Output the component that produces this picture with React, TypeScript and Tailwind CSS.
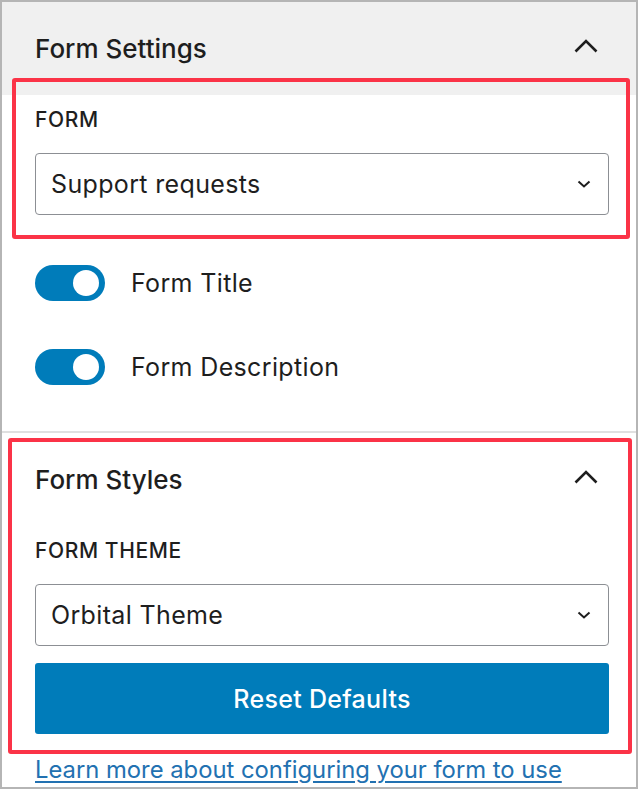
import { useState } from "react";

const FONT = { fontFamily: "Inter, 'Noto Sans', sans-serif" };

function ChevronUp() {
  return (
    <svg width="24" height="24" viewBox="0 0 24 24" fill="none" aria-hidden>
      <path d="M1.5 14.5 12 4l10.5 10.5" stroke="#1e1e1e" strokeWidth="2.6" />
    </svg>
  );
}

function ChevronDown() {
  return (
    <svg width="18" height="18" viewBox="0 0 18 18" fill="none" aria-hidden>
      <path d="M3.5 6.5 9 11.5l5.5-5" stroke="#1e1e1e" strokeWidth="2" />
    </svg>
  );
}

function SelectBox({ value }: { value: string }) {
  return (
    <div className="flex h-[62px] items-center justify-between rounded-[4px] border-[1.5px] border-[#8c8f94] bg-white pl-[15px] pr-[15px] text-[25px] leading-[28px] tracking-[0.35px] text-[#1e1e1e]">
      <span>{value}</span>
      <ChevronDown />
    </div>
  );
}

function Toggle({ label }: { label: string }) {
  const [on, setOn] = useState(true);
  return (
    <button
      type="button"
      onClick={() => setOn(!on)}
      className="flex h-[84px] items-center gap-[26px] text-left text-[25px] leading-[28px] tracking-[0.35px] text-[#1e1e1e]"
    >
      <span className="flex h-[36px] w-[70px] items-center justify-end rounded-full bg-[#007cba] pr-[6px]">
        <span className="h-[26px] w-[26px] rounded-full bg-white" />
      </span>
      {label}
    </button>
  );
}

export default function App() {
  return (
    <div className="bg-white" style={FONT}>
      <div className="relative h-[789px] w-[638px] overflow-hidden border-2 border-[#b5b5b5] bg-white">
        {/* Form Settings panel */}
        <div className="flex h-[93px] items-center justify-between bg-[#f0f0f0] pl-[33px] pr-[38px] text-[26px] font-medium leading-[30px] text-[#1e1e1e]">
          <span>Form Settings</span>
          <ChevronUp />
        </div>
        <div className="px-[33px]">
          <div className="mt-[13px] h-[24px] text-[21px] font-medium uppercase leading-[24px] tracking-[0.6px] text-[#1e1e1e]">
            Form
          </div>
          <div className="mt-[21px] w-[574px]">
            <SelectBox value="Support requests" />
          </div>
          <div className="mt-[26px] flex flex-col">
            <Toggle label="Form Title" />
            <Toggle label="Form Description" />
          </div>
        </div>
        <div className="mt-[22px] border-t-2 border-[#e0e0e0]" />

        {/* Form Styles panel */}
        <div className="flex h-[94px] items-center justify-between pl-[33px] pr-[38px] text-[26px] font-medium leading-[30px] text-[#1e1e1e]">
          <span>Form Styles</span>
          <ChevronUp />
        </div>
        <div className="px-[33px]">
          <div className="mt-[12px] h-[24px] text-[21px] font-medium uppercase leading-[24px] tracking-[0.6px] text-[#1e1e1e]">
            Form Theme
          </div>
          <div className="mt-[21px] w-[574px]">
            <SelectBox value="Orbital Theme" />
          </div>
          <button
            type="button"
            className="mt-[17px] flex h-[71px] w-[574px] items-center justify-center rounded-[3px] bg-[#007cba] text-[25px] font-medium leading-[28px] tracking-[0.3px] text-white"
          >
            Reset Defaults
          </button>
          <a
            href="#"
            className="mt-[22px] block h-[28px] whitespace-nowrap text-[23.8px] leading-[28px] text-[#2271b1] underline underline-offset-[3px]"
          >
            Learn more about configuring your form to use
          </a>
        </div>

        {/* annotation boxes */}
        <div className="pointer-events-none absolute left-[10px] top-[76px] h-[161px] w-[618px] rounded-[3px] border-4 border-[#fb3347]" />
        <div className="pointer-events-none absolute left-[6px] top-[436px] h-[316px] w-[624px] rounded-[3px] border-4 border-[#fb3347]" />
      </div>
    </div>
  );
}
